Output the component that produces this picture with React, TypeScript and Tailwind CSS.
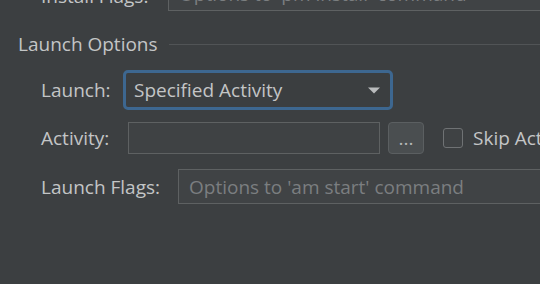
export default function App() {
  return (
    <div
      className="w-[540px] h-[284px] overflow-hidden bg-[#3c3f41] text-[19px] leading-[22px] text-[#c3c5c6]"
      style={{ fontFamily: '"Open Sans", "Liberation Sans", sans-serif' }}
    >
      {/* install flags row, mostly scrolled off */}
      <div className="flex items-center h-[35px] mt-[-24px] pl-[41px]">
        <div className="w-[127px] shrink-0 whitespace-nowrap mt-[5px]">Install Flags:</div>
        <div className="w-[420px] shrink-0 h-[35px] border border-[#5e6162] bg-[#404345] flex items-center pl-[10px] text-[#7b7e80] whitespace-nowrap">
          Options to 'pm install' command
        </div>
      </div>

      <div className="flex items-center h-[22px] mt-[22px] pl-[18px]">
        <div className="whitespace-nowrap">Launch Options</div>
        <div className="flex-1 h-px bg-[#515456] ml-[11px]" />
      </div>

      <div className="flex items-center mt-[15px] pl-[41px]">
        <div className="w-[82px] shrink-0">Launch:</div>
        <div className="w-[270px] h-[40px] rounded-[5px] border-[3px] border-[#3d6790] bg-[#3b3e40] flex items-center justify-between pl-[8px] pr-[10px]">
          <span className="whitespace-nowrap">Specified Activity</span>
          <svg width="12" height="7" viewBox="0 0 12 7">
            <path d="M0 0.5 L12 0.5 L6 6.5 Z" fill="#b9bbbc" />
          </svg>
        </div>
      </div>

      <div className="flex items-center h-[32px] mt-[12px] pl-[41px]">
        <div className="w-[87px] shrink-0">Activity:</div>
        <div className="w-[252px] shrink-0 h-[32px] border border-[#5e6162] bg-[#3f4244]" />
        <div className="ml-[8px] w-[36px] h-[32px] shrink-0 rounded-[4px] border border-[#5b5f61] bg-[#4a4e50] flex items-center justify-center text-[#b5b7b8]">
          ...
        </div>
        <div className="ml-[19px] w-[20px] h-[20px] shrink-0 rounded-[3px] border border-[#6f7274] bg-[#3f4244]" />
        <div className="ml-[10px] whitespace-nowrap">Skip Activity</div>
      </div>

      <div className="flex items-center h-[35px] mt-[15px] pl-[41px]">
        <div className="w-[137px] shrink-0 whitespace-nowrap">Launch Flags:</div>
        <div className="w-[400px] shrink-0 h-[35px] border border-[#5e6162] bg-[#404345] flex items-center pl-[10px] text-[#7b7e80] whitespace-nowrap">
          Options to 'am start' command
        </div>
      </div>
    </div>
  );
}
